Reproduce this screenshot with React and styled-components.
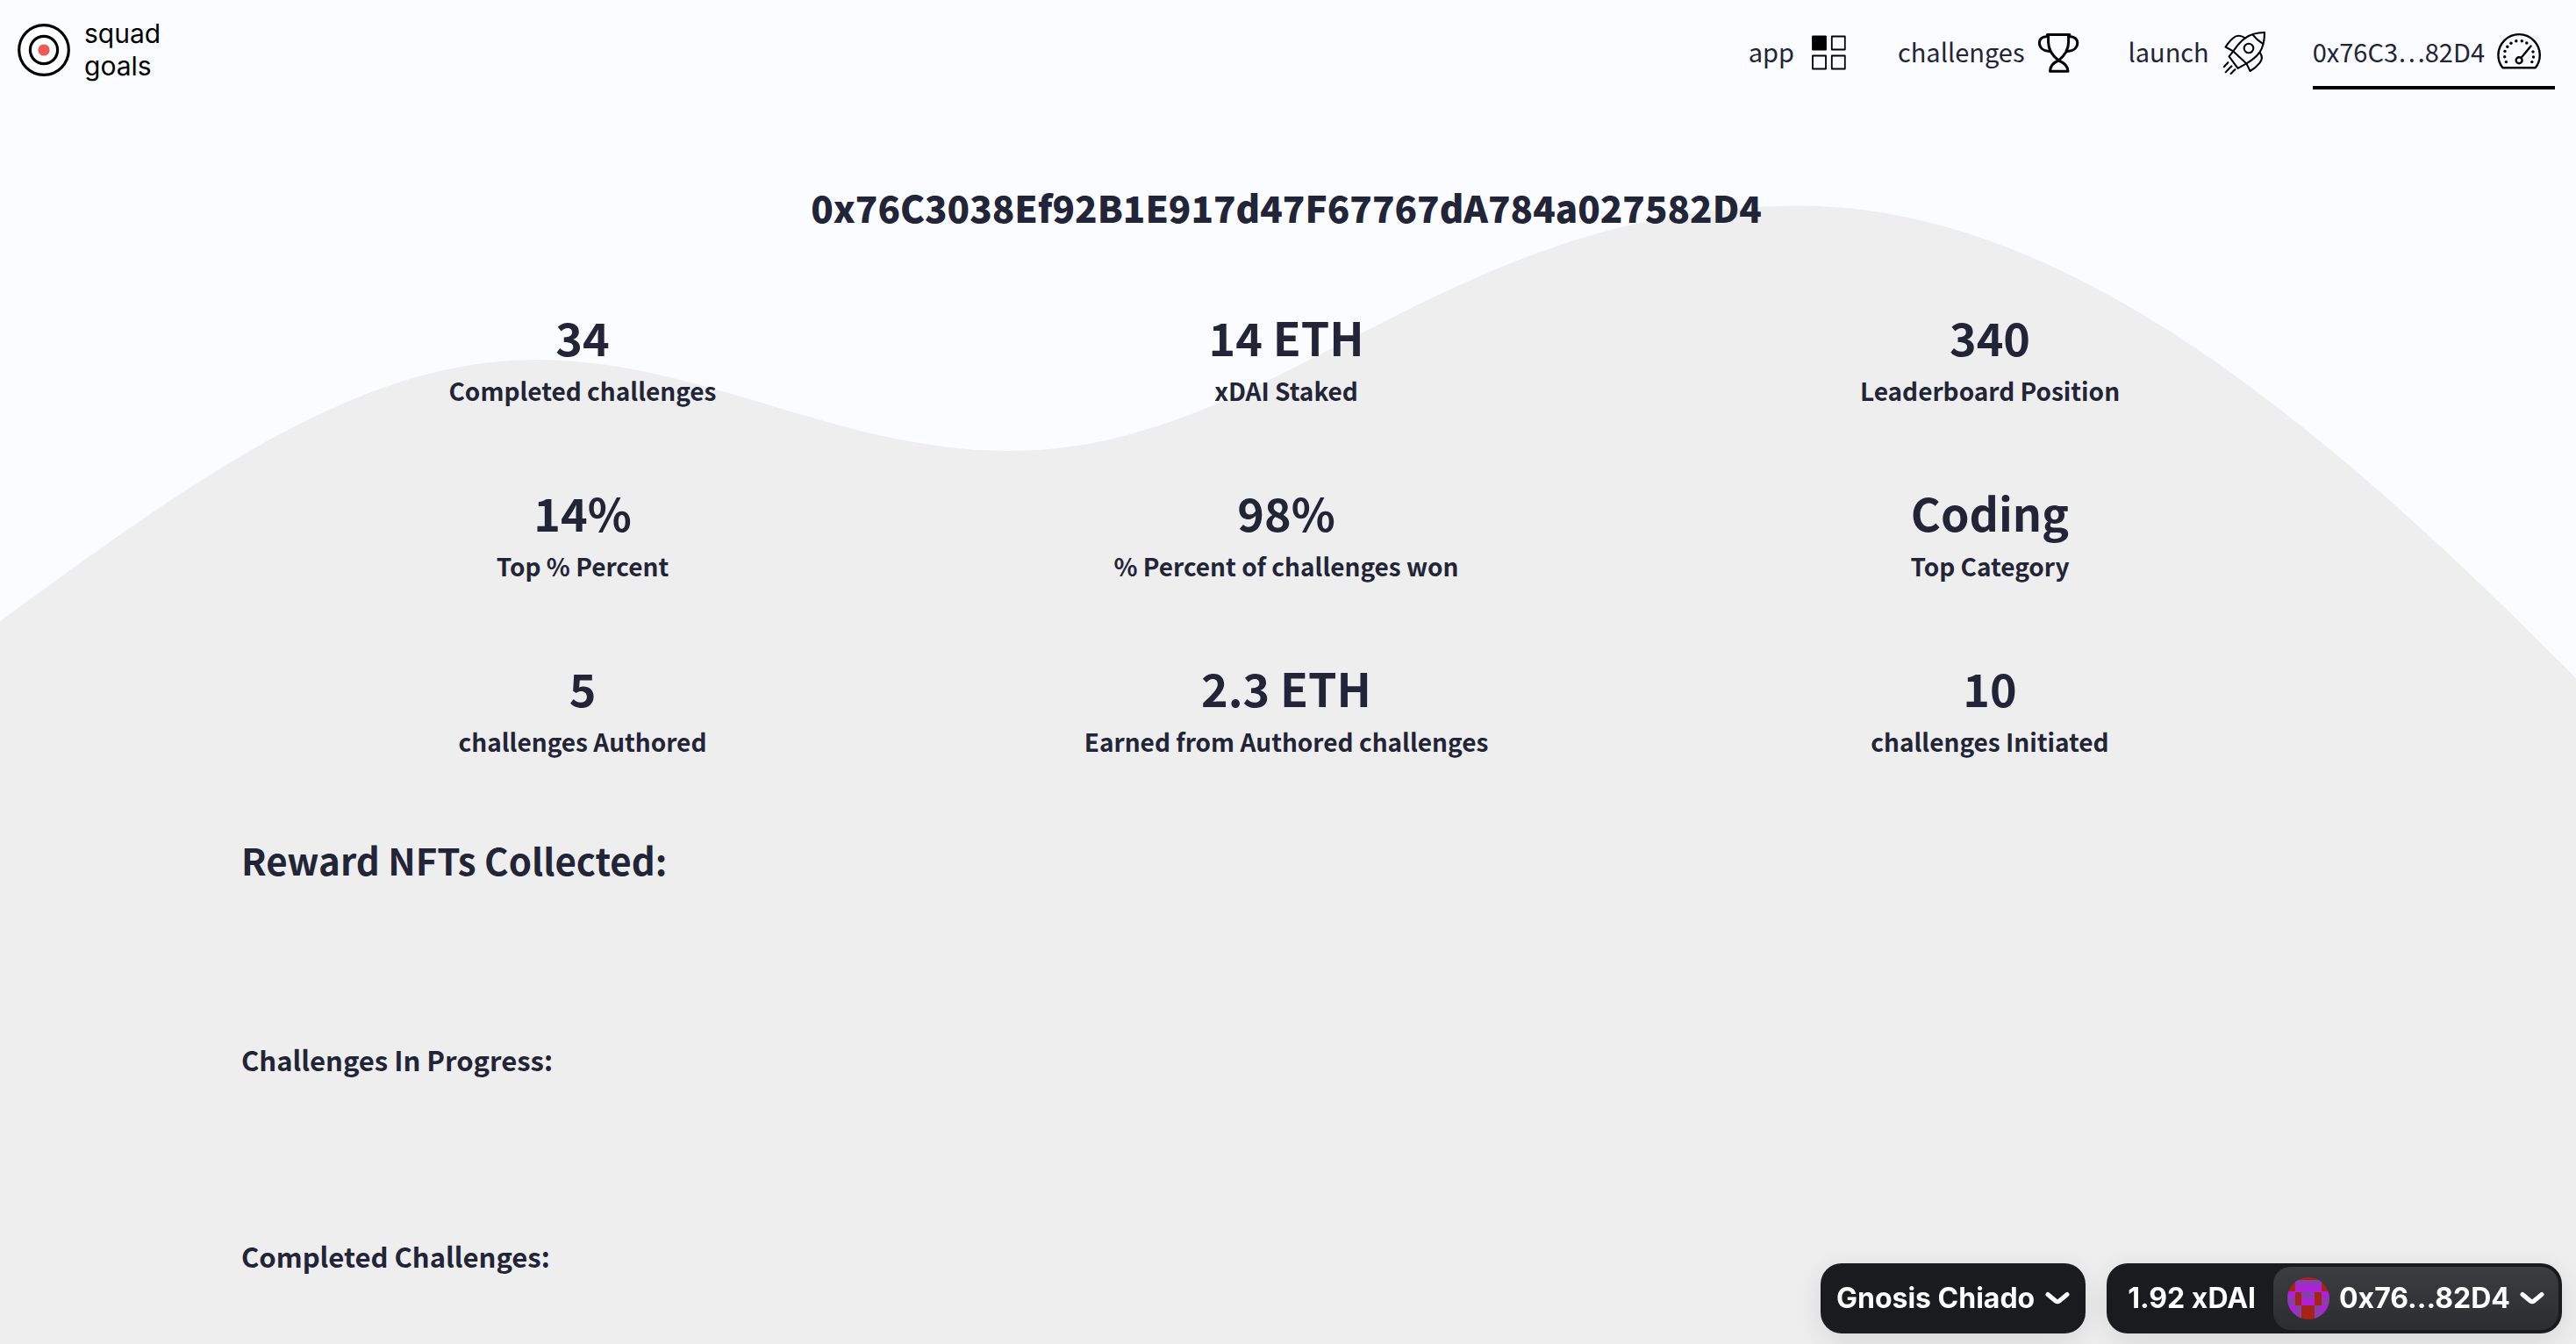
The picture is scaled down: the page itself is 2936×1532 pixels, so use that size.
import React from "react";
import styled, { createGlobalStyle, css } from "styled-components";

const ink = "#222437";
const sans = `"Noto Sans CJK KR", "Noto Sans", sans-serif`;

const GlobalStyle = createGlobalStyle`
  *, *::before, *::after { box-sizing: border-box; }
  body {
    margin: 0;
    background: #fbfcff;
    color: ${ink};
    font-family: ${sans};
  }
  h1, h2, h3, dl, dt, dd { margin: 0; }
`;

const Page = styled.div`
  position: relative;
  min-height: 100vh;
  overflow: hidden;
`;

const WaveLayer = styled.svg`
  position: absolute;
  inset: 0;
  width: 100%;
  height: 100%;
`;

const Header = styled.header`
  position: relative;
  display: flex;
  justify-content: space-between;
  align-items: flex-start;
  height: 120px;
  padding: 0 24px 0 20px;
`;

const Brand = styled.a`
  display: flex;
  align-items: center;
  gap: 16px;
  padding-top: 20px;
  color: #000;
  font: 400 30px/37px Inter, sans-serif;
  text-decoration: none;
`;

const BrandName = styled.span`
  display: flex;
  flex-direction: column;
`;

const Nav = styled.nav`
  display: flex;
  gap: 38px;
  padding-top: 35px;
`;

const NavLink = styled.a`
  display: flex;
  align-items: center;
  gap: 14px;
  padding: 0 16px 13px 0;
  border-bottom: 4px solid ${(p) => (p.$active ? "#000" : "transparent")};
  color: ${ink};
  font-size: 29px;
  line-height: 40px;
  text-decoration: none;
`;

const NavLabel = styled.span`
  padding-bottom: 4px;
`;

const NavIcon = styled.svg`
  width: 50px;
  height: 50px;
  fill: none;
  stroke: #000;
  stroke-width: ${(p) => p.$weight || 2};
  stroke-linejoin: round;
  stroke-linecap: round;
`;

const Main = styled.main`
  position: relative;
  padding: 84px 279px 76px 275px;
`;

const Address = styled.h1`
  font-size: 42px;
  line-height: 64px;
  font-weight: 900;
  text-align: center;
`;

const Stats = styled.dl`
  display: grid;
  grid-template-columns: repeat(3, 1fr);
  gap: 82px 24px;
  margin: 80px 0 82px;
`;

const Stat = styled.div`
  display: flex;
  flex-direction: column-reverse;
  gap: 4px;
  text-align: center;
  font-weight: 700;
`;

const StatLabel = styled.dt`
  font-size: 28px;
  line-height: 42px;
`;

const StatValue = styled.dd`
  font-size: 52px;
  line-height: 72px;
`;

const Section = styled.section`
  min-height: ${(p) => p.$height}px;
`;

const heading = css`
  font-weight: 700;
`;

const RewardHeading = styled.h2`
  ${heading}
  font-size: 42px;
  line-height: 64px;
`;

const ListHeading = styled.h3`
  ${heading}
  font-size: 31px;
  line-height: 48px;
`;

const WalletBar = styled.div`
  position: fixed;
  right: 16px;
  bottom: 12px;
  display: flex;
  gap: 24px;
`;

const WalletButton = styled.button`
  display: flex;
  align-items: center;
  height: 80px;
  padding: ${(p) => (p.$split ? "4px 4px 4px 24px" : "0 18px")};
  gap: ${(p) => (p.$split ? 20 : 12)}px;
  border: 0;
  border-radius: 24px;
  background: #1a1b1f;
  box-shadow: 0 8px 32px rgba(0, 0, 0, 0.1);
  color: #fff;
  font: 700 32px/40px Inter, sans-serif;
  white-space: nowrap;
`;

const AccountPill = styled.span`
  display: flex;
  align-items: center;
  gap: 11px;
  height: 72px;
  padding: 0 16px;
  border-radius: 20px;
  background: linear-gradient(#3c3d41, #2c2d31);
`;

const Avatar = styled.svg`
  width: 48px;
  height: 48px;
`;

const ChevronIcon = styled.svg`
  width: 28px;
  height: 16px;
  fill: none;
  stroke: #fff;
  stroke-width: 5;
  stroke-linecap: round;
  stroke-linejoin: round;
`;

function Wave() {
  return (
    <WaveLayer viewBox="0 0 2936 1532" preserveAspectRatio="none" aria-hidden="true">
      <path
        fill="#eeeeee"
        d="M0 708C200 563 400 410 610 410C800 410 955 514 1150 514C1455 514 1645 234.5 2050 234.5C2350 234.5 2640 474 2936 773V1532H0Z"
      />
    </WaveLayer>
  );
}

function Logo() {
  return (
    <svg width="60" height="60" viewBox="0 0 60 60" aria-hidden="true">
      <circle cx="30" cy="30" r="28.3" fill="#fff" stroke="#000" strokeWidth="3.2" />
      <circle cx="30" cy="30" r="15.6" fill="#fff" stroke="#000" strokeWidth="3.2" />
      <circle cx="30" cy="30" r="6.6" fill="#ee5a53" />
    </svg>
  );
}

function GridIcon() {
  return (
    <NavIcon viewBox="0 0 50 50" $weight={1.8} aria-hidden="true">
      <rect x="7" y="6.5" width="15" height="15" fill="#000" />
      <rect x="28.8" y="6.5" width="15" height="15" />
      <rect x="7" y="28.5" width="15" height="15" />
      <rect x="28.8" y="28.5" width="15" height="15" />
    </NavIcon>
  );
}

function TrophyIcon() {
  return (
    <NavIcon viewBox="0 0 50 50" $weight={3} aria-hidden="true">
      <path d="M12.4 4.4H37.8" />
      <path d="M13.6 4.4V13C13.6 23 19 29 25.2 34C31.4 29 36.6 23 36.6 13V4.4" />
      <path d="M13.4 6.8C7 6 3.4 9.6 3.4 14C3.4 19.4 8 23 14.6 23.6" />
      <path d="M36.8 6.8C43 6 46.8 9.6 46.8 14C46.8 19.4 42.2 23 35.6 23.6" />
      <path d="M25.2 34C19 36.4 15.8 40.4 15.6 46.2H36C35.6 40.4 31.6 36.4 25.2 34Z" />
    </NavIcon>
  );
}

function RocketIcon() {
  return (
    <NavIcon viewBox="0 0 50 50" $weight={2.1} aria-hidden="true">
      <path d="M49 2C41 2 33 4 27 8.4C21 12.6 17 18 13.4 23.4L28.4 37.4C34.4 33.8 39.6 30 43.4 24.6C48 18 49 10 49 2Z" />
      <path d="M35.6 4.6C38.6 8.6 42.4 11.8 46.8 14.6" />
      <circle cx="31" cy="20" r="5.3" />
      <path d="M27 8.4C22 5.2 17 5 13.4 8.2C9.6 11.4 6.8 14.8 4.6 18.6L13.4 23.4" />
      <path d="M43.6 24.6C46.4 28.6 46.6 33 43.6 36.6C40.4 40.6 36.8 43.8 32.6 46L28.4 37.4" />
      <path d="M13.4 23.4L8.6 29.4L18.6 42.8L28.4 37.4" />
      <path d="M7.4 36.2L2.8 41.2M11.4 40.4L4.8 47.2M15.4 44.2L10.6 49" strokeDasharray="3.4 1.2" />
    </NavIcon>
  );
}

const gaugeDots = [
  [10.4, 35.6], [8.7, 29.7], [9, 23.4], [11.8, 18.3], [16, 14.2], [21.8, 11.7],
  [28.3, 11.7], [33.8, 14], [41, 24], [41.5, 30], [39.8, 35.6],
];

function GaugeIcon() {
  return (
    <NavIcon viewBox="0 0 50 50" $weight={2.4} aria-hidden="true">
      <path d="M6.4 42.2C3 38 1.4 33.4 1.4 27.8A23.7 23.7 0 0 1 48.8 27.8C48.8 33.4 47.2 38 43.8 42.2Z" />
      <circle cx="25.1" cy="33.8" r="3.5" />
      <path d="M27.4 31L38.6 17.4" />
      {gaugeDots.map(([x, y]) => (
        <circle key={`${x}-${y}`} cx={x} cy={y} r="1.7" fill="#000" stroke="none" />
      ))}
    </NavIcon>
  );
}

function Chevron() {
  return (
    <ChevronIcon viewBox="0 0 28 16" aria-hidden="true">
      <path d="M3 3.5L12 11Q14 12.6 16 11L25 3.5" />
    </ChevronIcon>
  );
}

const plum = "#8a3dac";
const magenta = "#b01fdb";
const brick = "#a62318";
const avatarBlocks = [
  [9, 3, 30, 6, plum],
  [9, 9, 30, 7, magenta],
  [0, 16, 9, 8, magenta], [9, 16, 30, 1, plum], [16, 16, 15, 8, plum], [39, 16, 9, 8, magenta],
  [0, 23, 9, 9, plum], [16, 24, 15, 8, magenta], [39, 23, 9, 9, plum],
  [0, 32, 9, 8, magenta], [9, 32, 7, 16, plum], [31, 32, 8, 16, plum], [39, 32, 9, 8, magenta],
  [0, 40, 9, 8, plum], [39, 40, 9, 8, plum],
];

function AccountAvatar() {
  return (
    <Avatar viewBox="0 0 48 48" aria-hidden="true">
      <clipPath id="avatar-round">
        <circle cx="24" cy="24" r="24" />
      </clipPath>
      <g clipPath="url(#avatar-round)">
        <rect width="48" height="48" fill={brick} />
        {avatarBlocks.map(([x, y, w, h, fill]) => (
          <rect key={`${x}-${y}-${w}`} x={x} y={y} width={w} height={h} fill={fill} />
        ))}
      </g>
    </Avatar>
  );
}

const links = [
  { label: "app", Icon: GridIcon },
  { label: "challenges", Icon: TrophyIcon },
  { label: "launch", Icon: RocketIcon },
  { label: "0x76C3…82D4", Icon: GaugeIcon, active: true },
];

const stats = [
  ["34", "Completed challenges"],
  ["14 ETH", "xDAI Staked"],
  ["340", "Leaderboard Position"],
  ["14%", "Top % Percent"],
  ["98%", "% Percent of challenges won"],
  ["Coding", "Top Category"],
  ["5", "challenges Authored"],
  ["2.3 ETH", "Earned from Authored challenges"],
  ["10", "challenges Initiated"],
];

export default function App() {
  return (
    <Page>
      <GlobalStyle />
      <Wave />
      <Header>
        <Brand href="#home">
          <Logo />
          <BrandName>
            <span>squad</span>
            <span>goals</span>
          </BrandName>
        </Brand>
        <Nav>
          {links.map(({ label, Icon, active }) => (
            <NavLink key={label} href={`#${label}`} $active={active} aria-current={active ? "page" : undefined}>
              <NavLabel>{label}</NavLabel>
              <Icon />
            </NavLink>
          ))}
        </Nav>
      </Header>
      <Main>
        <Address>0x76C3038Ef92B1E917d47F67767dA784a027582D4</Address>
        <Stats>
          {stats.map(([value, label]) => (
            <Stat key={label}>
              <StatLabel>{label}</StatLabel>
              <StatValue>{value}</StatValue>
            </Stat>
          ))}
        </Stats>
        <Section $height={236}>
          <RewardHeading>Reward NFTs Collected:</RewardHeading>
        </Section>
        <Section $height={224}>
          <ListHeading>Challenges In Progress:</ListHeading>
        </Section>
        <Section>
          <ListHeading>Completed Challenges:</ListHeading>
        </Section>
      </Main>
      <WalletBar>
        <WalletButton type="button">
          Gnosis Chiado
          <Chevron />
        </WalletButton>
        <WalletButton type="button" $split>
          1.92 xDAI
          <AccountPill>
            <AccountAvatar />
            0x76...82D4
            <Chevron />
          </AccountPill>
        </WalletButton>
      </WalletBar>
    </Page>
  );
}
